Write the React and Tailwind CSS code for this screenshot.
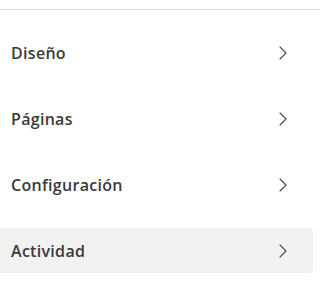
const ITEMS = [
  { label: "Diseño" },
  { label: "Páginas" },
  { label: "Configuración" },
  { label: "Actividad", active: true },
];

function Chevron() {
  return (
    <svg width="8" height="14" viewBox="0 0 8 14" fill="none" className="text-[#4a4a4a]">
      <path d="M1 1l6 6-6 6" stroke="currentColor" strokeWidth="1.1" strokeLinecap="round" strokeLinejoin="round" />
    </svg>
  );
}

export default function App() {
  return (
    <div className="h-[308px] w-[320px] bg-white" style={{ fontFamily: "'Open Sans', Lato, sans-serif" }}>
      <div className="h-[10px] border-b border-[#d6d6d6]" />
      <ul className="flex flex-col gap-[21px] pt-[20px]">
        {ITEMS.map((item) => (
          <li
            key={item.label}
            className={
              "flex h-[45px] w-[313px] items-center justify-between rounded-r-[3px] pl-[11px] pr-[26px] " +
              (item.active ? "bg-[#f2f2f2]" : "")
            }
          >
            <span className="text-[16px] font-semibold tracking-[0.3px] text-[#3a3a3a]">{item.label}</span>
            <Chevron />
          </li>
        ))}
      </ul>
    </div>
  );
}
